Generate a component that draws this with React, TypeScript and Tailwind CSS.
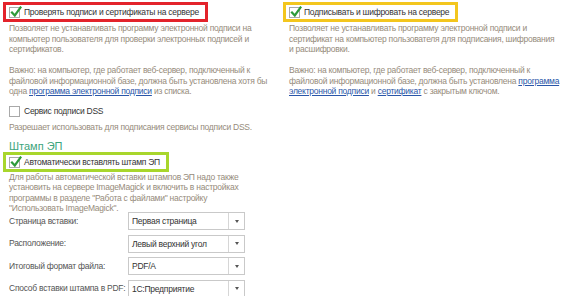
const font = { fontFamily: '"Liberation Sans", Arial, sans-serif' };

function Box({ checked }: { checked?: boolean }) {
  return (
    <span className="relative inline-flex h-[11px] w-[11px] shrink-0 items-center justify-center border border-[#a9a9a9] bg-white">
      {checked && (
        <svg viewBox="0 0 12 12" className="absolute -top-[2px] left-[0px] h-[12px] w-[12px]" aria-hidden>
          <path d="M2 6.5 L4.8 9.5 L10.5 1.5" fill="none" stroke="#2e9a3a" strokeWidth="2.2" strokeLinecap="square" />
        </svg>
      )}
    </span>
  );
}

function Flag({ label, color, checked = true }: { label: string; color: string; checked?: boolean }) {
  return (
    <div className={`flex h-[20px] w-fit items-center gap-[4px] border-[3px] pl-[3px] pr-[6px] text-[#333] ${color}`}>
      <Box checked={checked} />
      <span>{label}</span>
    </div>
  );
}

function Link({ children }: { children: React.ReactNode }) {
  return <span className="text-[#2a56a8] underline">{children}</span>;
}

function Select({ value }: { value: string }) {
  return (
    <div className="flex h-[18px] w-[117px] items-stretch border border-[#c9c9c9] bg-white text-[#333]">
      <span className="flex-1 truncate pl-[3px] leading-[16px]">{value}</span>
      <span className="flex w-[16px] items-center justify-center border-l border-[#d6d6d6]">
        <span className="h-0 w-0 border-x-[2px] border-t-[3px] border-x-transparent border-t-[#555]" />
      </span>
    </div>
  );
}

export default function App() {
  const rows = [
    ['Страница вставки:', 'Первая страница'],
    ['Расположение:', 'Левый верхний угол'],
    ['Итоговый формат файла:', 'PDF/A'],
    ['Способ вставки штампа в PDF:', '1С:Предприятие'],
  ];

  // line breaks follow the original form's wrapping
  const note = 'whitespace-nowrap pl-[6px] text-[#968b7b]';

  return (
    <div style={font} className="flex h-[296px] w-[572px] overflow-hidden bg-white pl-[3px] pt-[2px] text-[8.5px] leading-[10.5px] tracking-[-0.25px]">
      {/* left column */}
      <div className="w-[280px] shrink-0">
        <Flag label="Проверять подписи и сертификаты на сервере" color="border-[#e3232b]" />
        <div className={`mt-[1px] ${note}`}>
          <p>
            Позволяет не устанавливать программу электронной подписи на
            <br />
            компьютер пользователя для проверки электронных подписей и
            <br />
            сертификатов.
          </p>
          <p className="mt-[10.5px]">
            Важно: на компьютер, где работает веб-сервер, подключенный к
            <br />
            файловой информационной базе, должна быть установлена хотя бы
            <br />
            одна <Link>программа электронной подписи</Link> из списка.
          </p>
        </div>

        <div className="mt-[9px] flex items-center gap-[4px] pl-[6px] text-[#333]">
          <Box />
          <span>Сервис подписи DSS</span>
        </div>
        <p className={`mt-[5px] ${note}`}>Разрешает использовать для подписания сервисы подписи DSS.</p>

        <div className="mt-[8px] pl-[6px] text-[11px] leading-[12px] tracking-normal text-[#3da47c]">Штамп ЭП</div>
        <Flag label="Автоматически вставлять штамп ЭП" color="border-[#a8d62c]" />
        <p className={`leading-[10.3px] ${note}`}>
          Для работы автоматической вставки штампов ЭП надо также
          <br />
          установить на сервере ImageMagick и включить в настройках
          <br />
          программы в разделе "Работа с файлами" настройку
          <br />
          "Использовать ImageMagick".
        </p>

        <div className="-mt-[1px] flex flex-col gap-[4.5px] pl-[6px]">
          {rows.map(([label, value]) => (
            <div key={label} className="flex items-center">
              <span className="w-[119px] shrink-0 whitespace-nowrap text-[#555]">{label}</span>
              <Select value={value} />
            </div>
          ))}
        </div>
      </div>

      {/* right column */}
      <div className="w-[285px] shrink-0">
        <Flag label="Подписывать и шифровать на сервере" color="border-[#f3c61e]" />
        <div className={`mt-[1px] ${note}`}>
          <p>
            Позволяет не устанавливать программу электронной подписи и
            <br />
            сертификат на компьютер пользователя для подписания, шифрования
            <br />
            и расшифровки.
          </p>
          <p className="mt-[10.5px]">
            Важно: на компьютер, где работает веб-сервер, подключенный к
            <br />
            файловой информационной базе, должна быть установлена <Link>программа</Link>
            <br />
            <Link>электронной подписи</Link> и <Link>сертификат</Link> с закрытым ключом.
          </p>
        </div>
      </div>
    </div>
  );
}
